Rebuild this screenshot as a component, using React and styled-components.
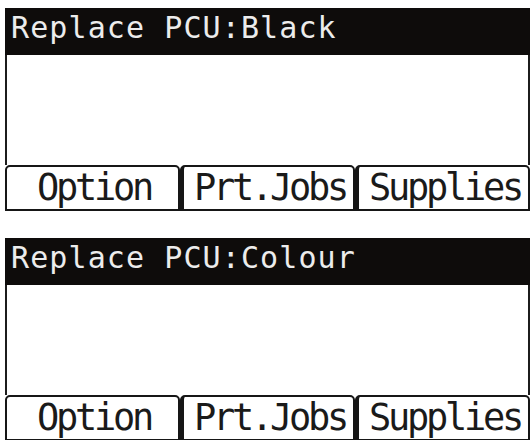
import React from 'react';
import styled, { createGlobalStyle } from 'styled-components';

const GlobalStyle = createGlobalStyle`
    body {
        margin: 0;
        background: #fff;
        font-family: "DejaVu Sans Mono", "Liberation Mono", monospace;
    }
`;

const Page = styled.div`
    display: flex;
    flex-direction: column;
    gap: 27px;
    padding: 8px 1px 0 5px;
`;

const Screen = styled.div`
    width: 525px;
    display: flex;
    flex-direction: column;
`;

const Title = styled.div`
    height: 47px;
    line-height: 40px;
    padding-left: 6px;
    background: #0e0c0b;
    color: #ececec;
    font-size: 30px;
    letter-spacing: 1.1px;
    white-space: pre;
`;

const Body = styled.div`
    height: 110px;
    border-left: 2px solid #1c1c1c;
    border-right: 2px solid #1c1c1c;
    background: #fff;
`;

const TabRow = styled.div`
    display: flex;
    height: 46px;
`;

const Tab = styled.div`
    flex: 0 0 ${(p) => p.$w}px;
    box-sizing: border-box;
    border: 2px solid #161616;
    border-left-width: ${(p) => (p.$first ? 2 : 4)}px;
    border-radius: 5px 5px 0 0;
    line-height: 42px;
    text-align: center;
    padding-left: 3px;
    color: #1a1a1a;
    font-size: 37px;
    letter-spacing: -3.27px;
    overflow: hidden;
    white-space: nowrap;
`;

const tabs = [
    { label: 'Option', w: 175 },
    { label: 'Prt.Jobs', w: 175 },
    { label: 'Supplies', w: 175 },
];

const PanelScreen = ({ title }) => (
    <Screen>
        <Title>{title}</Title>
        <Body />
        <TabRow>
            {tabs.map((t, i) => (
                <Tab key={t.label} $w={t.w} $first={i === 0}>
                    {t.label}
                </Tab>
            ))}
        </TabRow>
    </Screen>
);

const App = () => (
    <>
        <GlobalStyle />
        <Page>
            <PanelScreen title="Replace PCU:Black" />
            <PanelScreen title="Replace PCU:Colour" />
        </Page>
    </>
);

export default App;
